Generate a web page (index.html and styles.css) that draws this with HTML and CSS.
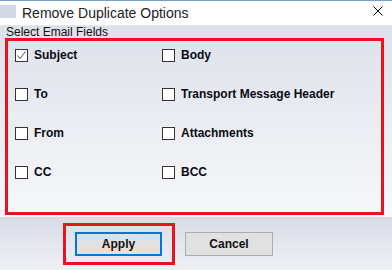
FILE: index.html
```html
<!DOCTYPE html>
<html>
<head>
  <meta charset="UTF-8" />
  <title>Remove Duplicate Options</title>
  <link rel="stylesheet" href="styles.css">
</head>
<body>
  <div class="window">
    <!-- Title bar -->
    <div class="titlebar">
      <span class="app-icon"></span>
      <span class="title">Remove Duplicate Options</span>
      <svg class="close" width="10" height="10" viewBox="0 0 10 10">
        <path d="M0.5 0.5 L9.5 9.5 M9.5 0.5 L0.5 9.5" stroke="#000" stroke-width="1" />
      </svg>
    </div>

    <!-- Fields -->
    <div class="content">
      <div class="group-label">Select Email Fields</div>
      <div class="fields highlight">
        <label class="field"><span class="check checked">
          <svg width="11" height="11" viewBox="0 0 11 11"><path d="M1.5 5.5 L4 8.5 L9.5 1.5" fill="none" stroke="#6d6d6d" stroke-width="1.1" /></svg>
        </span>Subject</label>
        <label class="field"><span class="check"></span>Body</label>
        <label class="field"><span class="check"></span>To</label>
        <label class="field"><span class="check"></span>Transport Message Header</label>
        <label class="field"><span class="check"></span>From</label>
        <label class="field"><span class="check"></span>Attachments</label>
        <label class="field"><span class="check"></span>CC</label>
        <label class="field"><span class="check"></span>BCC</label>
      </div>
    </div>

    <!-- Buttons -->
    <div class="footer">
      <div class="apply-wrap highlight">
        <button class="button default">Apply</button>
      </div>
      <button class="button">Cancel</button>
    </div>
  </div>
</body>
</html>
```

FILE: styles.css
```css
body {
  margin: 0;
  font-family: 'Liberation Sans', Arial, sans-serif;
  background: #ffffff;
}
.window {
  width: 392px;
  height: 270px;
  overflow: hidden;
}
.titlebar {
  height: 25px;
  border-top: 1px solid #7b9cc1;
  display: flex;
  align-items: center;
  background: #ffffff;
  box-sizing: border-box;
}
.app-icon {
  width: 16px;
  height: 13px;
  margin-top: -3px;
  background: #d3d9e4;
}
.title {
  margin-left: 6px;
  font-size: 14px;
  color: #222;
  flex: 1;
}
.close {
  margin-right: 9px;
  margin-top: -5px;
}
.content {
  height: 192px;
  border-top: 1px solid #e8e8e8;
  background: linear-gradient(#dde1ea, #f7f8fa);
  padding: 0 0 0 5px;
  box-sizing: border-box;
}
.group-label {
  font-size: 12px;
  color: #111;
  padding: 0 0 0 1px;
  height: 12px;
  line-height: 12px;
}
.highlight {
  border: 3px solid #e8141c;
}
.fields {
  width: 379px;
  height: 177px;
  display: grid;
  grid-template-columns: 147px 1fr;
  grid-auto-rows: 39px;
  padding: 8px 0 0 7px;
  box-sizing: border-box;
}
.field {
  display: flex;
  align-items: flex-start;
  font-size: 12px;
  font-weight: bold;
  color: #0a0a14;
  line-height: 13px;
}
.check {
  width: 11px;
  height: 11px;
  border: 1px solid #333;
  background: #fff;
  margin-right: 6px;
  display: flex;
}
.footer {
  height: 52px;
  border-top: 2px solid #dadada;
  background: linear-gradient(#d9dde8, #f0f2f6);
  display: flex;
  align-items: flex-start;
  padding: 4px 0 0 63px;
  gap: 10px;
}
.apply-wrap {
  padding: 6px 10px 6px 9px;
  width: 87px;
}
.button {
  font-family: 'Liberation Sans', Arial, sans-serif;
  font-size: 12px;
  font-weight: bold;
  color: #111;
  background: #e1e1e1;
  border: 1px solid #adadad;
  width: 88px;
  height: 24px;
  margin-top: 9px;
  padding: 0;
}
.button.default {
  border: 2px solid #0078d7;
  width: 87px;
  margin-top: 0;
}
```
